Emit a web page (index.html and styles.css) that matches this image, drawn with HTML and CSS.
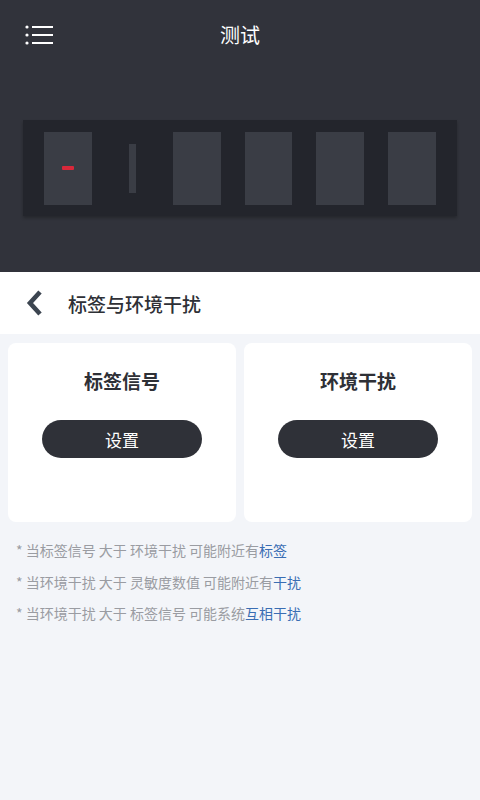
FILE: index.html
```html
<!DOCTYPE html>
<html lang="zh-CN">
<head>
    <meta charset="UTF-8">
    <meta name="viewport" content="width=device-width, initial-scale=1.0">
    <title>测试</title>
    <link rel="stylesheet" href="styles.css">
</head>
<body>
    <div class="header">
        <div class="topbar">
            <svg class="menu-icon" width="28" height="20" viewBox="0 0 28 20">
                <circle cx="2" cy="2" r="1.6" fill="#fff"/>
                <circle cx="2" cy="10" r="1.6" fill="#fff"/>
                <circle cx="2" cy="18" r="1.6" fill="#fff"/>
                <rect x="7" y="1" width="21" height="2" fill="#fff"/>
                <rect x="7" y="9" width="21" height="2" fill="#fff"/>
                <rect x="7" y="17" width="21" height="2" fill="#fff"/>
            </svg>
            <div class="title">测试</div>
        </div>
        <div class="panel">
            <div class="slot"><span class="dash"></span></div>
            <div class="slot thin"><span class="bar"></span></div>
            <div class="slot"></div>
            <div class="slot"></div>
            <div class="slot"></div>
            <div class="slot"></div>
        </div>
    </div>

    <div class="subbar">
        <svg class="back" width="18" height="26" viewBox="0 0 18 26">
            <path d="M15 2 L5 13 L15 24" fill="none" stroke="#3c4550" stroke-width="4.6" stroke-linejoin="miter"/>
        </svg>
        <span class="subtitle">标签与环境干扰</span>
    </div>

    <div class="content">
        <div class="cards">
            <div class="card">
                <div class="card-title">标签信号</div>
                <button class="btn">设置</button>
            </div>
            <div class="card">
                <div class="card-title">环境干扰</div>
                <button class="btn">设置</button>
            </div>
        </div>
        <ul class="notes">
            <li>* 当标签信号 大于 环境干扰 可能附近有<span class="hl">标签</span></li>
            <li>* 当环境干扰 大于 灵敏度数值 可能附近有<span class="hl">干扰</span></li>
            <li>* 当环境干扰 大于 标签信号 可能系统<span class="hl">互相干扰</span></li>
        </ul>
    </div>
</body>
</html>
```

FILE: styles.css
```css
body {
    margin: 0;
    padding: 0;
    font-family: "Noto Sans CJK SC", "Noto Sans", sans-serif;
    background-color: #f3f5f9;
    width: 480px;
    height: 800px;
    overflow: hidden;
}
.header {
    background-color: #31333b;
    height: 272px;
    box-sizing: border-box;
    padding-top: 16px;
}
.topbar {
    position: relative;
    height: 40px;
    display: flex;
    align-items: center;
    justify-content: center;
}
.menu-icon {
    position: absolute;
    left: 25px;
    top: 9px;
}
.title {
    color: #fff;
    font-size: 20px;
    margin-top: -4px;
}
.panel {
    margin: 64px 23px 0;
    height: 96px;
    background-color: #23252c;
    display: flex;
    align-items: center;
    gap: 24px;
    padding: 0 21px;
    box-shadow: 0 2px 3px rgba(0, 0, 0, 0.25);
}
.slot {
    width: 48px;
    height: 73px;
    background-color: #3a3d45;
    display: flex;
    align-items: center;
    justify-content: center;
}
.slot.thin {
    background: none;
    width: 57px;
    margin: 0 -12px;
}
.dash {
    width: 12px;
    height: 4px;
    background-color: #d8283a;
    border-radius: 1px;
}
.bar {
    width: 7px;
    height: 49px;
    background-color: #3a3d45;
}
.subbar {
    background-color: #fff;
    height: 62px;
    display: flex;
    align-items: center;
    padding-left: 25px;
}
.back {
    margin-right: 25px;
}
.subtitle {
    font-size: 19px;
    font-weight: 500;
    color: #2e3036;
}
.content {
    padding: 9px 8px 0;
}
.cards {
    display: flex;
    gap: 8px;
}
.card {
    flex: 1;
    height: 179px;
    background-color: #fff;
    border-radius: 8px;
    display: flex;
    flex-direction: column;
    align-items: center;
    box-sizing: border-box;
    padding-top: 24px;
}
.card-title {
    font-size: 19px;
    font-weight: 700;
    color: #2e3036;
    line-height: 28px;
}
.btn {
    margin-top: 25px;
    width: 160px;
    height: 38px;
    border: none;
    border-radius: 19px;
    background-color: #2f3138;
    color: #fff;
    font-family: inherit;
    font-size: 17px;
}
.notes {
    list-style: none;
    margin: 18px 0 0;
    padding: 0 0 0 8px;
}
.notes li {
    font-size: 14px;
    color: #9a9ca2;
    height: 31.5px;
    line-height: 20px;
}
.hl {
    color: #3a6db3;
}
```
